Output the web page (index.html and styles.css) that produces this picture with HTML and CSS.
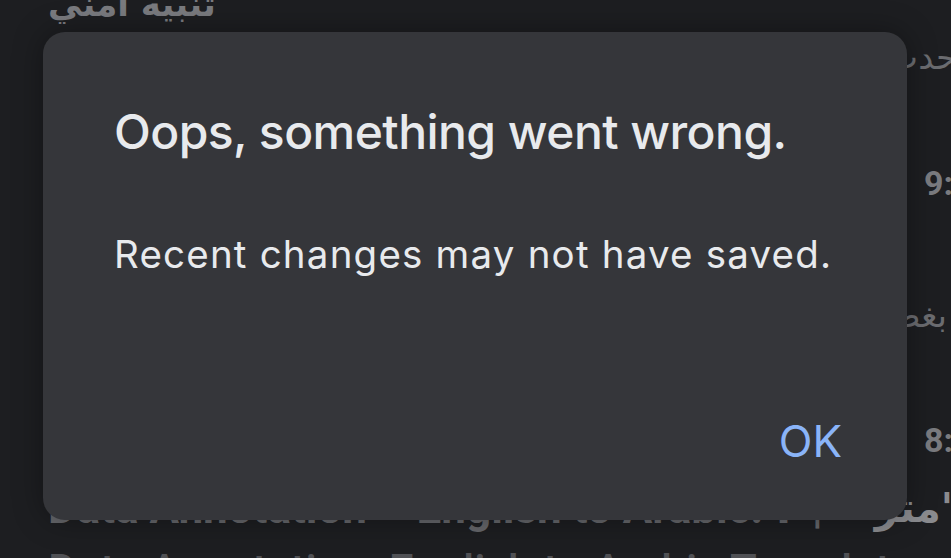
FILE: index.html
```html
<!DOCTYPE html>
<html lang="en">
<head>
<meta charset="utf-8">
<title>Oops</title>
<link rel="stylesheet" href="styles.css">
</head>
<body>
<div class="page">
  <div class="list">
    <div class="row row-1"><span class="ar bold">تنبيه أمني</span></div>
    <div class="row row-2 rtl"><span class="ar edge" dir="rtl">حدث خطأ أثناء الحفظ</span></div>
    <div class="row row-3"><span class="num">9:41</span></div>
    <div class="row row-4 rtl"><span class="ar inset" dir="rtl">بغض النظر عن ذلك</span></div>
    <div class="row row-5"><span class="num">8:30</span></div>
    <div class="row row-6"><span class="lat">Data Annotation – English to Arabic: ٢ |</span><span class="ar tail" dir="rtl">'متر</span></div>
    <div class="row row-7"><span class="lat">Data Annotation: English to Arabic Translator</span></div>
  </div>
</div>
<div class="dialog" role="alertdialog">
  <h1 class="title">Oops, something went wrong.</h1>
  <p class="message">Recent changes may not have saved.</p>
  <div class="actions"><button class="ok">OK</button></div>
</div>
</body>
</html>
```
FILE: styles.css
```css
html, body {
  margin: 0;
  padding: 0;
  width: 951px;
  height: 558px;
  overflow: hidden;
  background: #1d1e21;
}
.page {
  width: 951px;
  height: 558px;
  overflow: hidden;
  color: #707175;
  font-family: Roboto, "DejaVu Sans", sans-serif;
}
.list {
  display: flex;
  flex-direction: column;
}
.row {
  display: flex;
  align-items: center;
  white-space: nowrap;
  padding-left: 48px;
  overflow: hidden;
}
.rtl {
  justify-content: flex-end;
  padding-left: 0;
}
.edge { margin-right: -6px; }
.inset { margin-right: 4px; }
.ar { font-family: "DejaVu Sans", sans-serif; }
.bold { font-weight: 700; }
.row-1 { height: 40px; margin-top: -16px; font-size: 34px; color: #7a7b7f; }
.row-2 { height: 40px; margin-top: 13px; font-size: 34px; color: #6b6c70; }
.row-3 { height: 44px; margin-top: 84px; font-size: 34px; font-weight: 700; padding-left: 924px; color: #7a7b7f; }
.row-4 { height: 40px; margin-top: 90px; font-size: 34px; color: #6b6c70; }
.row-5 { height: 44px; margin-top: 83px; font-size: 34px; font-weight: 700; padding-left: 924px; color: #7a7b7f; }
.row-6 { height: 48px; margin-top: 22px; font-size: 44px; font-weight: 700; color: #66676b; }
.row-6 .tail { margin-left: auto; margin-right: -2px; font-size: 40px; color: #8a8b8f; }
.row-7 { height: 48px; margin-top: 15px; font-size: 44px; font-weight: 500; color: #505155; }

.dialog {
  position: absolute;
  left: 43px;
  top: 32px;
  width: 864px;
  height: 488px;
  box-sizing: border-box;
  padding: 72px 65px 53px 71px;
  background: #35363a;
  border-radius: 22px;
  box-shadow: 0 0 30px rgba(0, 0, 0, 0.35);
  display: flex;
  flex-direction: column;
  font-family: Inter, Roboto, sans-serif;
  color: #e8eaed;
}
.title {
  margin: 0;
  font-size: 48px;
  line-height: 56px;
  font-weight: 500;
  letter-spacing: -0.55px;
}
.message {
  margin: 71px 0 0;
  font-size: 38.5px;
  line-height: 46px;
  font-weight: 400;
  letter-spacing: 1.2px;
}
.actions {
  margin-top: auto;
  display: flex;
  justify-content: flex-end;
}
.ok {
  background: none;
  border: 0;
  padding: 0;
  font-family: inherit;
  font-size: 44px;
  line-height: 52px;
  font-weight: 400;
  color: #8ab4f8;
}
```
